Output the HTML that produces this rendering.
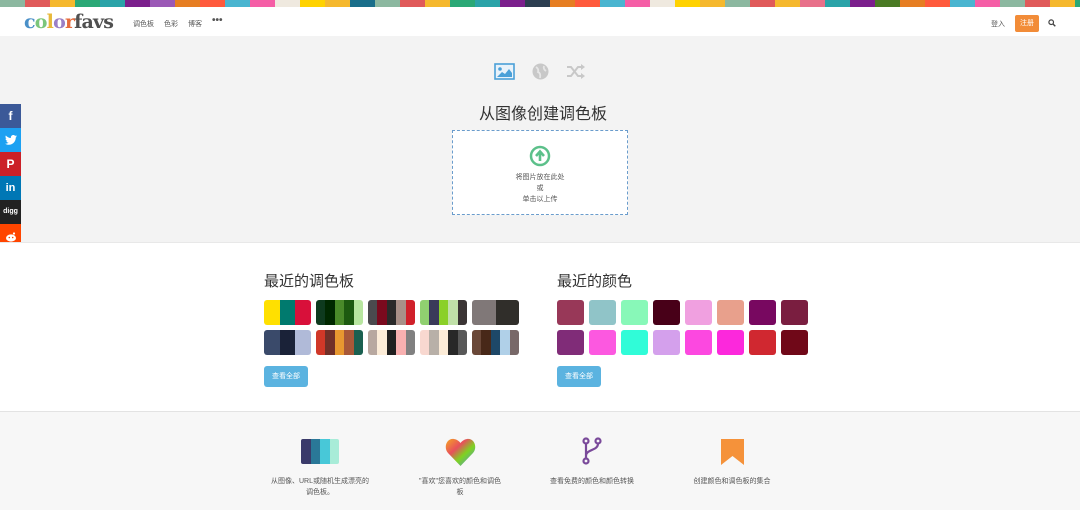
<!DOCTYPE html>
<html><head><meta charset="utf-8">
<style>
*{margin:0;padding:0;box-sizing:border-box}
body{width:1080px;height:510px;overflow:hidden;background:#f3f3f3;font-family:"Liberation Sans","Noto Sans CJK SC",sans-serif;color:#444;position:relative}
.stripe{position:absolute;top:0;left:0;width:1080px;height:7px;display:flex}
.stripe div{width:25px;height:7px;flex:none}
.hdr{position:absolute;top:7px;left:0;width:1080px;height:29px;background:#fff}
.logo{position:absolute;left:24px;top:4px;font-size:19px;font-weight:bold;font-family:"DejaVu Serif","Liberation Serif",serif;letter-spacing:-0.8px}
.nav{position:absolute;top:12px;font-size:7px;color:#555}
.s1{position:absolute;left:0;top:36px;width:1080px;height:206px;background:#f3f3f3}
.s2{position:absolute;left:0;top:242px;width:1080px;height:170px;background:#fff;border-top:1px solid #e8e8e8;border-bottom:1px solid #e3e3e3}
.s3{position:absolute;left:0;top:412px;width:1080px;height:98px;background:#f7f7f7}
.side{position:absolute;left:0;width:21px;height:24px;color:#fff;font-weight:bold;text-align:center;line-height:24px;font-size:12px}
.pal{position:absolute;width:47px;height:25px;border-radius:3px;overflow:hidden;display:flex}
.pal div{flex:1}
.sq{position:absolute;width:27px;height:25px;border-radius:3px}
.btn{position:absolute;width:44px;height:21px;background:#5bb3e0;color:#fff;font-size:7px;line-height:21px;text-align:center;border-radius:3px}
.h2{position:absolute;font-size:15px;color:#333}
.ft{position:absolute;font-size:7px;color:#555;text-align:center;width:120px;line-height:11px}
</style></head><body>
<div class="stripe">
<div style="background:#8cb8a0"></div><div style="background:#e05a5a"></div><div style="background:#f5b82e"></div><div style="background:#2aa876"></div><div style="background:#2aa3a8"></div><div style="background:#7b1f8c"></div><div style="background:#9b59b6"></div><div style="background:#e67e22"></div><div style="background:#ff5a3c"></div><div style="background:#4ab5d0"></div><div style="background:#f55ea6"></div><div style="background:#efe9df"></div><div style="background:#ffd200"></div><div style="background:#f5b82e"></div><div style="background:#1a6e8a"></div>
<div style="background:#8cb8a0"></div><div style="background:#e05a5a"></div><div style="background:#f5b82e"></div><div style="background:#2aa876"></div><div style="background:#2aa3a8"></div><div style="background:#7b1f8c"></div><div style="background:#2c3e50"></div><div style="background:#e67e22"></div><div style="background:#ff5a3c"></div><div style="background:#4ab5d0"></div><div style="background:#f55ea6"></div><div style="background:#efe9df"></div><div style="background:#ffd200"></div><div style="background:#f5b82e"></div><div style="background:#8cb8a0"></div>
<div style="background:#e05a5a"></div><div style="background:#f5b82e"></div><div style="background:#e8708a"></div><div style="background:#2aa3a8"></div><div style="background:#7b1f8c"></div><div style="background:#4a7a24"></div><div style="background:#e67e22"></div><div style="background:#ff5a3c"></div><div style="background:#4ab5d0"></div><div style="background:#f55ea6"></div><div style="background:#8cb8a0"></div><div style="background:#e05a5a"></div><div style="background:#f5b82e"></div><div style="background:#2aa876"></div>
</div>
<div class="hdr">
<div class="logo"><span style="color:#4a90c8">c</span><span style="color:#7bc67b">o</span><span style="color:#e8b93a">l</span><span style="color:#9b7fc6">o</span><span style="color:#e66b3c">r</span><span style="color:#505050">favs</span></div>
<div class="nav" style="left:133px">调色板</div>
<div class="nav" style="left:164px">色彩</div>
<div class="nav" style="left:188px">博客</div>
<div class="nav" style="left:212px;font-size:10px;top:8px;font-weight:bold">•••</div>
<div class="nav" style="left:991px">登入</div>
<div style="position:absolute;left:1015px;top:8px;width:24px;height:17px;background:#f28c38;border-radius:2px;color:#fff;font-size:7px;text-align:center;line-height:17px">注册</div>
<svg style="position:absolute;left:1048px;top:12px" width="8" height="8" viewBox="0 0 8 8"><circle cx="3.2" cy="3.2" r="2.3" fill="none" stroke="#444" stroke-width="1.2"/><line x1="5" y1="5" x2="7.3" y2="7.3" stroke="#444" stroke-width="1.4"/></svg>
</div>
<div class="s1">
<svg style="position:absolute;left:494px;top:27px" width="21" height="17" viewBox="0 0 21 17"><rect x="1" y="1" width="19" height="15" fill="#e8f2fa" stroke="#4aa0d8" stroke-width="1.6"/><circle cx="6" cy="6" r="1.8" fill="#4aa0d8"/><path d="M3 14 L8 9 L11 11 L15 6 L18 10 L18 14 Z" fill="#4aa0d8"/></svg>
<svg style="position:absolute;left:532px;top:27px" width="17" height="17" viewBox="0 0 17 17"><circle cx="8.5" cy="8.5" r="8" fill="#c8c8c8"/><path d="M4 4 Q7 6 6 9 Q9 10 8 15 M12 3 Q11 6 14 8" stroke="#e6e6e6" stroke-width="1.8" fill="none"/></svg>
<svg style="position:absolute;left:566px;top:27px" width="20" height="17" viewBox="0 0 20 17"><path d="M1 4 H5 L12 13 H17 M1 13 H5 L12 4 H17" stroke="#c8c8c8" stroke-width="2" fill="none"/><path d="M15 1 L19 4 L15 7 Z M15 10 L19 13 L15 16 Z" fill="#c8c8c8"/></svg>
<div class="h2" style="left:479px;top:64px;font-size:16px">从图像创建调色板</div>
<div style="position:absolute;left:452px;top:94px;width:176px;height:85px;border:1px dashed #6a9ccc;background:#fff"></div>
<svg style="position:absolute;left:529px;top:109px" width="22" height="22" viewBox="0 0 22 22"><circle cx="11" cy="11" r="9" fill="none" stroke="#5cc08a" stroke-width="2.5"/><path d="M11 16 V8 M7 11 L11 6.5 L15 11" stroke="#5cc08a" stroke-width="2.6" fill="none"/></svg>
<div style="position:absolute;left:452px;top:136px;width:176px;text-align:center;font-size:7px;line-height:11px;color:#555">将图片放在此处<br>或<br>单击以上传</div>
</div>
<div class="side" style="top:104px;background:#3b5998">f</div>
<div class="side" style="top:128px;background:#1da1f2"><svg width="12" height="10" viewBox="0 0 24 20" style="margin-top:7px"><path d="M24 2.4c-.9.4-1.8.6-2.8.8 1-.6 1.8-1.6 2.2-2.7-1 .6-2 1-3.1 1.2C19.4.7 18.1 0 16.6 0c-2.7 0-4.9 2.2-4.9 4.9 0 .4 0 .8.1 1.1C7.7 5.8 4.1 3.9 1.7.9c-.4.7-.7 1.6-.7 2.5 0 1.7.9 3.2 2.2 4.1-.8 0-1.6-.2-2.2-.6v.1c0 2.4 1.7 4.4 3.9 4.8-.4.1-.8.2-1.3.2-.3 0-.6 0-.9-.1.6 2 2.4 3.4 4.6 3.4-1.7 1.3-3.8 2.1-6.1 2.1-.4 0-.8 0-1.2-.1C2.2 18.8 4.8 19.6 7.5 19.6c9.1 0 14-7.5 14-14v-.6c1-.7 1.8-1.6 2.5-2.6z" fill="#fff"/></svg></div>
<div class="side" style="top:152px;background:#cb2027">P</div>
<div class="side" style="top:176px;background:#0077b5;font-size:11px">in</div>
<div class="side" style="top:200px;background:#222;font-size:7px">digg</div>
<div class="side" style="top:224px;background:#ff4500"><svg width="12" height="10" viewBox="0 0 12 10" style="margin-top:8px"><ellipse cx="6" cy="6" rx="5" ry="3.6" fill="#fff"/><circle cx="9" cy="1.5" r="1.1" fill="#fff"/><circle cx="4.3" cy="5.5" r=".8" fill="#ff4500"/><circle cx="7.7" cy="5.5" r=".8" fill="#ff4500"/></svg></div>
<div class="s2">
<div class="h2" style="left:264px;top:27px">最近的调色板</div>
<div class="h2" style="left:557px;top:27px">最近的颜色</div>
</div>
<div class="pal" style="left:264px;top:300px"><div style="background:#ffe000"></div><div style="background:#007a6e"></div><div style="background:#d8103a"></div></div>
<div class="pal" style="left:316px;top:300px"><div style="background:#0e3a1e"></div><div style="background:#002800"></div><div style="background:#4a8a2a"></div><div style="background:#1d5a10"></div><div style="background:#b8e6a0"></div></div>
<div class="pal" style="left:368px;top:300px"><div style="background:#4a4a4e"></div><div style="background:#7a0a1e"></div><div style="background:#2a2a2a"></div><div style="background:#a89088"></div><div style="background:#d0202a"></div></div>
<div class="pal" style="left:420px;top:300px"><div style="background:#90d070"></div><div style="background:#3a3a5a"></div><div style="background:#8ad028"></div><div style="background:#c0e0a8"></div><div style="background:#3a3434"></div></div>
<div class="pal" style="left:472px;top:300px"><div style="background:#807878"></div><div style="background:#302e2a"></div></div>
<div class="pal" style="left:264px;top:330px"><div style="background:#3a4a6a"></div><div style="background:#1a2238"></div><div style="background:#b0bad8"></div></div>
<div class="pal" style="left:316px;top:330px"><div style="background:#d03828"></div><div style="background:#703028"></div><div style="background:#e89830"></div><div style="background:#a85838"></div><div style="background:#1a6050"></div></div>
<div class="pal" style="left:368px;top:330px"><div style="background:#b8a8a0"></div><div style="background:#fcecd8"></div><div style="background:#202020"></div><div style="background:#f8b0b0"></div><div style="background:#808080"></div></div>
<div class="pal" style="left:420px;top:330px"><div style="background:#f8d8d0"></div><div style="background:#b8b0a8"></div><div style="background:#fcecd8"></div><div style="background:#282828"></div><div style="background:#585858"></div></div>
<div class="pal" style="left:472px;top:330px"><div style="background:#6a4838"></div><div style="background:#482818"></div><div style="background:#1e4868"></div><div style="background:#b0d0e8"></div><div style="background:#786868"></div></div>
<div class="sq" style="left:557px;top:300px;background:#983858"></div>
<div class="sq" style="left:589px;top:300px;background:#90c4c8"></div>
<div class="sq" style="left:621px;top:300px;background:#88f8b8"></div>
<div class="sq" style="left:653px;top:300px;background:#480018"></div>
<div class="sq" style="left:685px;top:300px;background:#f0a0e0"></div>
<div class="sq" style="left:717px;top:300px;background:#e8a08c"></div>
<div class="sq" style="left:749px;top:300px;background:#780860"></div>
<div class="sq" style="left:781px;top:300px;background:#7a1e40"></div>
<div class="sq" style="left:557px;top:330px;background:#802c78"></div>
<div class="sq" style="left:589px;top:330px;background:#fc58e0"></div>
<div class="sq" style="left:621px;top:330px;background:#30fcd8"></div>
<div class="sq" style="left:653px;top:330px;background:#d4a0ec"></div>
<div class="sq" style="left:685px;top:330px;background:#fc48e0"></div>
<div class="sq" style="left:717px;top:330px;background:#fc28dc"></div>
<div class="sq" style="left:749px;top:330px;background:#d02830"></div>
<div class="sq" style="left:781px;top:330px;background:#700818"></div>
<div class="btn" style="left:264px;top:366px">查看全部</div>
<div class="btn" style="left:557px;top:366px">查看全部</div>
<div class="s3"></div>
<div style="position:absolute;left:301px;top:439px;width:38px;height:25px;display:flex;border-radius:2px;overflow:hidden"><div style="flex:1;background:#3a3a6a"></div><div style="flex:1;background:#2a7898"></div><div style="flex:1;background:#48c8d8"></div><div style="flex:1;background:#a8ecd8"></div></div>
<svg style="position:absolute;left:445px;top:437px" width="31" height="30" viewBox="0 0 31 30"><defs><linearGradient id="g" x1="0" y1="0" x2="1" y2="1"><stop offset="0" stop-color="#f5a623"/><stop offset="0.35" stop-color="#e8505b"/><stop offset="0.6" stop-color="#7ed321"/><stop offset="1" stop-color="#4a90e2"/></linearGradient></defs><path d="M15.5 29 L3 16 C-2 10 2 1 9 2 C12 2.5 14 4 15.5 6 C17 4 19 2.5 22 2 C29 1 33 10 28 16 Z" fill="url(#g)"/></svg>
<svg style="position:absolute;left:582px;top:437px" width="20" height="28" viewBox="0 0 20 28"><g stroke="#7a4a9a" stroke-width="2.2" fill="none"><circle cx="4" cy="4" r="2.5"/><circle cx="16" cy="4" r="2.5"/><circle cx="4" cy="24" r="2.5"/><path d="M4 6.5 V21.5 M16 6.5 C16 14 4 12 4 19"/></g></svg>
<svg style="position:absolute;left:721px;top:439px" width="23" height="26" viewBox="0 0 23 26"><path d="M0 0 H23 V26 L11.5 17 L0 26 Z" fill="#f5923a"/></svg>
<div class="ft" style="left:260px;top:476px">从图像、URL或随机生成漂亮的<br>调色板。</div>
<div class="ft" style="left:400px;top:476px">"喜欢"您喜欢的颜色和调色<br>板</div>
<div class="ft" style="left:532px;top:476px">查看免费的颜色和颜色转换</div>
<div class="ft" style="left:672px;top:476px">创建颜色和调色板的集合</div>
</body></html>
